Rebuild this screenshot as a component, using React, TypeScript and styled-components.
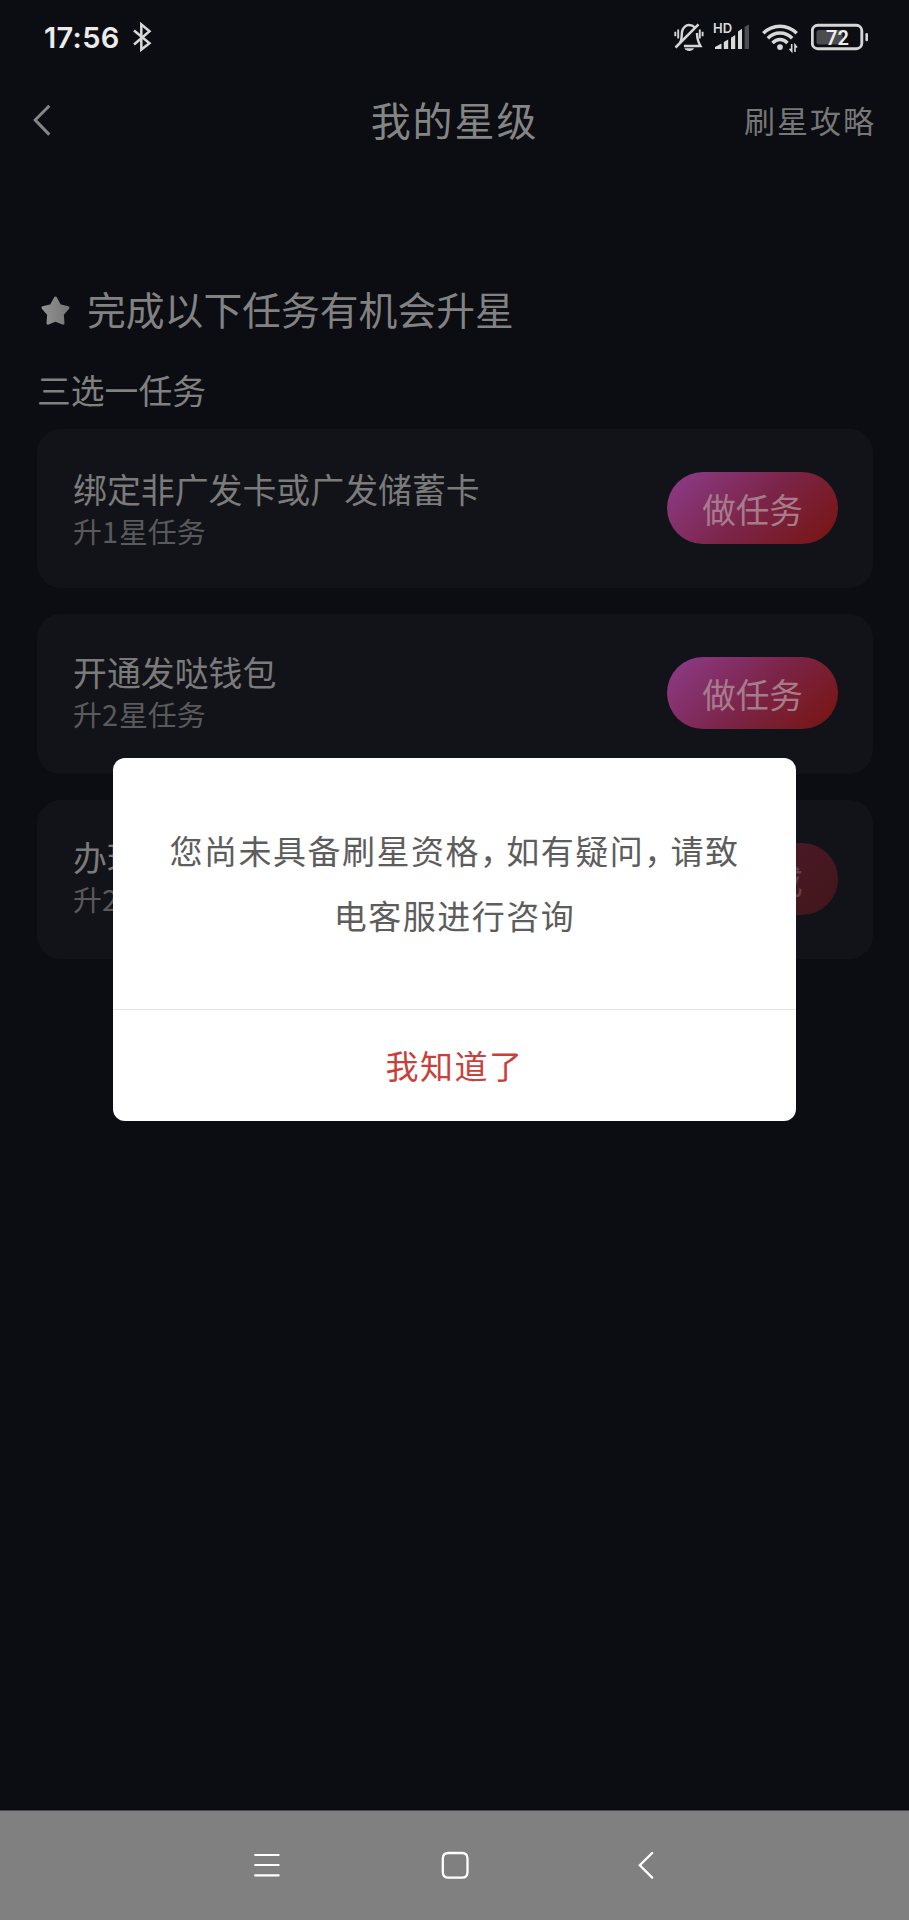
import React from 'react';
import styled, { createGlobalStyle } from 'styled-components';

const GlobalStyle = createGlobalStyle`
  * { box-sizing: border-box; }
  body {
    margin: 0;
    background: #0b0d12;
    font-family: "Noto Sans CJK SC", sans-serif;
  }
  button {
    font: inherit;
    border: 0;
    padding: 0;
    background: none;
  }
`;

const Screen = styled.div`
  position: relative;
  display: flex;
  flex-direction: column;
  width: 909px;
  height: 1920px;
  overflow: hidden;
  background: #0b0d12;
`;

const StatusBar = styled.div`
  display: flex;
  justify-content: space-between;
  height: 75px;
  padding: 17px 40px 0 44px;
`;

const StatusGroup = styled.div<{ $gap: number }>`
  display: flex;
  align-items: center;
  gap: ${(p) => p.$gap}px;
  height: 40px;
`;

const Clock = styled.span`
  width: 76px;
  font-family: Inter, sans-serif;
  font-size: 29px;
  font-weight: 600;
  line-height: 41px;
  letter-spacing: 0.3px;
  white-space: nowrap;
  color: #ebebeb;
`;

const Header = styled.header`
  display: grid;
  grid-template-columns: 1fr auto 1fr;
  align-items: center;
  height: 90px;
  padding: 0 33px 0 30px;
  color: #858585;
`;

const BackButton = styled.button`
  display: flex;
  justify-self: start;
`;

const PageTitle = styled.h1`
  margin: 0;
  padding: 0 0 2px 3px;
  font-size: 40px;
  font-weight: 400;
  line-height: 60px;
  letter-spacing: 1.9px;
`;

const GuideLink = styled.span`
  justify-self: end;
  font-size: 31px;
  line-height: 60px;
  letter-spacing: 2px;
  color: #777;
`;

const Main = styled.main`
  display: flex;
  flex: 1;
  flex-direction: column;
  padding: 115px 36px 0 37px;
`;

const SectionHeading = styled.div`
  display: flex;
  align-items: center;
  gap: 16px;
  height: 60px;
  padding-left: 2px;
`;

const HeadingText = styled.h2`
  margin: 0;
  padding-bottom: 5px;
  font-size: 38.8px;
  font-weight: 400;
  line-height: 60px;
  color: #828283;
`;

const GroupLabel = styled.div`
  height: 50px;
  margin-top: 25px;
  font-size: 33.8px;
  line-height: 50px;
  color: #808081;
`;

const TaskList = styled.div`
  display: flex;
  flex-direction: column;
  gap: 26px;
  margin-top: 14px;
`;

const TaskCard = styled.article`
  display: flex;
  justify-content: space-between;
  height: 159.4px;
  padding: 43px 35px 0 36px;
  border-radius: 24px;
  background: #121318;
`;

const TaskInfo = styled.div<{ $shift: number }>`
  margin-top: ${(p) => p.$shift}px;
`;

const TaskName = styled.div`
  height: 40px;
  font-size: 33.9px;
  line-height: 40px;
  color: #7b7b7c;
`;

const TaskReward = styled.div`
  font-size: 28.9px;
  line-height: 42px;
  color: #5a5a5c;
`;

const Level = styled.span`
  letter-spacing: 1px;
`;

const TaskButton = styled.button<{ $done?: boolean }>`
  width: 171px;
  height: 72px;
  border-radius: 36px;
  font-size: 33.6px;
  line-height: 74px;
  text-align: center;
  color: ${(p) => (p.$done ? '#694047' : '#a67c8d')};
  background: ${(p) =>
    p.$done
      ? 'linear-gradient(135deg, #4a2344 0%, #471822 65%, #42151a 100%)'
      : 'linear-gradient(135deg, #8a3981 8%, #7b2448 52%, #781717 92%)'};
`;

const NavBar = styled.nav`
  display: flex;
  align-items: center;
  justify-content: space-between;
  height: 110px;
  padding: 0 252px 2px;
  border-top: 1px solid #4a4a4a;
  background: #808080;
`;

const Overlay = styled.div`
  position: absolute;
  top: 758px;
  left: 113px;
  width: 683px;
`;

const Dialog = styled.section`
  display: flex;
  flex-direction: column;
  height: 363px;
  border-radius: 12px;
  overflow: hidden;
  background: #fff;
`;

const Message = styled.p`
  height: 252px;
  margin: 0;
  padding-top: 60px;
  border-bottom: 1px solid #e4e4e4;
  font-size: 33px;
  line-height: 65px;
  letter-spacing: 1.5px;
  text-align: center;
  white-space: nowrap;
  color: #5d5d5d;
`;

const Comma = styled.span`
  font-feature-settings: "halt";
  letter-spacing: 9.7px;
`;

const ConfirmButton = styled.button`
  flex: 1;
  font-size: 33px;
  letter-spacing: 1.5px;
  line-height: 109px;
  color: #c93f3a;
`;

const tasks = [
  { name: '绑定非广发卡或广发储蓄卡', level: 1, action: '做任务', done: false, shift: -3 },
  { name: '开通发哒钱包', level: 2, action: '做任务', done: false, shift: -5 },
  { name: '办理', level: 2, action: '已完成', done: true, shift: -5.5 },
];

const BluetoothIcon = () => (
  <svg width="20" height="30" viewBox="132 22 20 30" fill="none" stroke="#d8d8d8" strokeWidth="2.5">
    <path d="M134 30.5 L149.5 43.2 L141.3 49.6 V24.4 L149.5 31.3 L134 44.5" />
  </svg>
);

const MutedBellIcon = () => (
  <svg width="30" height="32" viewBox="674 21 30 32" fill="none" stroke="#d5d5d5" strokeWidth="2.4">
    <path d="M680 43 C682 40 681.5 36 682 32 C682.6 27.5 686 25 689 25 C691.5 25 693.3 25.8 694.8 27.3 M697 33 C697 38 697.5 41 700.5 46 H684" />
    <path d="M675.5 47.5 L698.5 24.3" strokeWidth="2.5" />
    <path d="M684.5 48.3 H694 C692.5 51.8 686 51.8 684.5 48.3Z" fill="#d5d5d5" stroke="none" />
    <path d="M678.2 29.5 V38.5 M675.3 31.8 V36.2 M699.8 29.5 V38.5 M702.6 31.8 V36.2" strokeWidth="1.9" />
  </svg>
);

const SignalIcon = () => (
  <svg width="41" height="32" viewBox="712 21 41 32" fill="#dadada">
    <text x="713" y="32.8" fontFamily="Inter, sans-serif" fontSize="13" fontWeight="600">HD</text>
    <path d="M715 49 V47 L721.5 43.5 V49Z M723.8 49 V42 L728.2 39.6 V49Z M731 49 V37.8 L735.2 35 V49Z M738 49 V31.5 L742 28.8 V49Z" />
    <path d="M744.6 49 V26.8 L749 24.5 V49Z" fill="#4c4d50" />
  </svg>
);

const WifiIcon = () => (
  <svg width="42" height="32" viewBox="761 21 42 32" fill="none" stroke="#d8d8d8" strokeWidth="3.4">
    <path d="M763.3 33.3 C772.5 23.8 787.5 23.8 796.7 33.3 M767.8 38.3 C774.5 31.3 785.5 31.3 792.2 38.3 M772.5 43 C777 38.4 783 38.4 787.5 43" />
    <circle cx="780" cy="47.1" r="2.9" fill="#d8d8d8" stroke="none" />
    <path d="M791.7 44 V51.2 L789.6 48.8 M795 52 V45 L797 47.4" strokeWidth="1.6" />
  </svg>
);

const BatteryIcon = () => (
  <svg width="58" height="32" viewBox="811 21 58 32">
    <rect x="812.3" y="25.3" width="49.5" height="23.4" rx="5.5" fill="none" stroke="#d5d5d5" strokeWidth="2.9" />
    <rect x="816.5" y="30" width="26" height="14.5" rx="2.5" fill="#4b4c50" />
    <rect x="865.4" y="33" width="2.6" height="8.3" rx="1.2" fill="#d5d5d5" />
    <text x="837.4" y="44.6" textAnchor="middle" fontFamily="Roboto, sans-serif" fontSize="20" fontWeight="600" fill="#ededed">72</text>
  </svg>
);

const ChevronIcon = () => (
  <svg width="24" height="36" viewBox="30 102 24 36" fill="none" stroke="#858585" strokeWidth="3">
    <path d="M49.3 105.8 L35.2 120 L49.3 134.6" />
  </svg>
);

const StarIcon = () => (
  <svg width="32" height="32" viewBox="39 295 32 32">
    <defs>
      <linearGradient id="star" x1="0" x2="1">
        <stop offset="0" stopColor="#919191" />
        <stop offset="1" stopColor="#777" />
      </linearGradient>
    </defs>
    <path
      d="M55.5 299 L59.7 306.7 L68 308.7 L62.3 315.2 L63 324.2 L55.5 321 L48 324.2 L48.7 315.2 L43 308.7 L51.3 306.7Z"
      fill="url(#star)"
      stroke="url(#star)"
      strokeWidth="3"
      strokeLinejoin="round"
    />
  </svg>
);

const MenuIcon = () => (
  <svg width="30" height="30" viewBox="252 1850 30 30" stroke="#fff" strokeWidth="2.2" strokeLinecap="round">
    <path d="M255.2 1855 H278.6 M255.2 1865 H278.6 M255.2 1875.4 H278.6" />
  </svg>
);

const HomeIcon = () => (
  <svg width="30" height="30" viewBox="439.5 1850 30 30" fill="none" stroke="#fff" strokeWidth="2.3">
    <path d="M448 1853 H461.5 Q467 1853 467 1858.5 V1872 Q467 1877.7 461.5 1877.7 H448 Q442.3 1877.7 442.3 1872 V1858.5 Q442.3 1853 448 1853Z" />
  </svg>
);

const NavBackIcon = () => (
  <svg width="30" height="30" viewBox="627 1850 30 30" fill="none" stroke="#fff" strokeWidth="2.3" strokeLinecap="round">
    <path d="M652.2 1853 L639.8 1865.3 L652.2 1877.6" />
  </svg>
);

export default function App() {
  return (
    <>
      <GlobalStyle />
      <Screen>
        <StatusBar>
          <StatusGroup $gap={12}>
            <Clock>17:56</Clock>
            <BluetoothIcon />
          </StatusGroup>
          <StatusGroup $gap={8}>
            <MutedBellIcon />
            <SignalIcon />
            <WifiIcon />
            <BatteryIcon />
          </StatusGroup>
        </StatusBar>
        <Header>
          <BackButton aria-label="返回">
            <ChevronIcon />
          </BackButton>
          <PageTitle>我的星级</PageTitle>
          <GuideLink>刷星攻略</GuideLink>
        </Header>
        <Main>
          <SectionHeading>
            <StarIcon />
            <HeadingText>完成以下任务有机会升星</HeadingText>
          </SectionHeading>
          <GroupLabel>三选一任务</GroupLabel>
          <TaskList>
            {tasks.map((task) => (
              <TaskCard key={task.name}>
                <TaskInfo $shift={task.shift}>
                  <TaskName>{task.name}</TaskName>
                  <TaskReward>
                    升<Level>{task.level}</Level>星任务
                  </TaskReward>
                </TaskInfo>
                <TaskButton $done={task.done}>{task.action}</TaskButton>
              </TaskCard>
            ))}
          </TaskList>
        </Main>
        <NavBar>
          <MenuIcon />
          <HomeIcon />
          <NavBackIcon />
        </NavBar>
        <Overlay>
          <Dialog role="dialog">
            <Message>
              您尚未具备刷星资格<Comma>，</Comma>如有疑问<Comma>，</Comma>请致
              <br />
              电客服进行咨询
            </Message>
            <ConfirmButton>我知道了</ConfirmButton>
          </Dialog>
        </Overlay>
      </Screen>
    </>
  );
}
